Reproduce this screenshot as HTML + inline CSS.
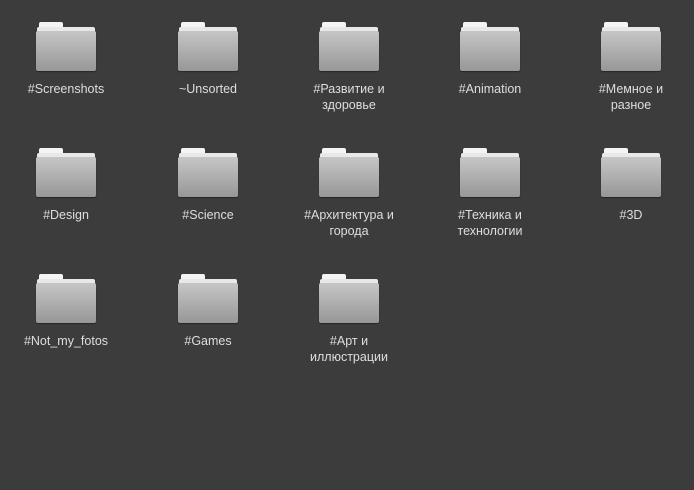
<!DOCTYPE html><html><head><style>
body{margin:0;width:694px;height:490px;background:#3c3c3c;font-family:"Liberation Sans","DejaVu Sans",sans-serif;position:relative;overflow:hidden}
.f{position:absolute;width:140px;text-align:center;color:#dedede;font-size:12.5px;line-height:16px}
.ic{position:relative;width:60px;height:50px;margin:0 auto 9px}
.tab{position:absolute;left:3px;top:0;width:24px;height:8px;background:#f4f4f4;border-radius:2px 2px 0 0}
.back{position:absolute;left:1px;top:5px;width:58px;height:6px;background:#e8e8e8;border-radius:2px 2px 0 0}
.body{position:absolute;left:0;top:9px;width:60px;height:40px;background:linear-gradient(#c6c6c6,#979797);border-radius:2px;box-shadow:0 1px 1px rgba(0,0,0,.4)}
</style></head><body>
<div class="f" style="left:-4px;top:22px"><div class="ic"><div class="tab"></div><div class="back"></div><div class="body"></div></div>#Screenshots</div>
<div class="f" style="left:138px;top:22px"><div class="ic"><div class="tab"></div><div class="back"></div><div class="body"></div></div>~Unsorted</div>
<div class="f" style="left:279px;top:22px"><div class="ic"><div class="tab"></div><div class="back"></div><div class="body"></div></div>#Развитие и<br>здоровье</div>
<div class="f" style="left:420px;top:22px"><div class="ic"><div class="tab"></div><div class="back"></div><div class="body"></div></div>#Animation</div>
<div class="f" style="left:561px;top:22px"><div class="ic"><div class="tab"></div><div class="back"></div><div class="body"></div></div>#Мемное и<br>разное</div>
<div class="f" style="left:-4px;top:148px"><div class="ic"><div class="tab"></div><div class="back"></div><div class="body"></div></div>#Design</div>
<div class="f" style="left:138px;top:148px"><div class="ic"><div class="tab"></div><div class="back"></div><div class="body"></div></div>#Science</div>
<div class="f" style="left:279px;top:148px"><div class="ic"><div class="tab"></div><div class="back"></div><div class="body"></div></div>#Архитектура и<br>города</div>
<div class="f" style="left:420px;top:148px"><div class="ic"><div class="tab"></div><div class="back"></div><div class="body"></div></div>#Техника и<br>технологии</div>
<div class="f" style="left:561px;top:148px"><div class="ic"><div class="tab"></div><div class="back"></div><div class="body"></div></div>#3D</div>
<div class="f" style="left:-4px;top:274px"><div class="ic"><div class="tab"></div><div class="back"></div><div class="body"></div></div>#Not_my_fotos</div>
<div class="f" style="left:138px;top:274px"><div class="ic"><div class="tab"></div><div class="back"></div><div class="body"></div></div>#Games</div>
<div class="f" style="left:279px;top:274px"><div class="ic"><div class="tab"></div><div class="back"></div><div class="body"></div></div>#Арт и<br>иллюстрации</div>
</body></html>
